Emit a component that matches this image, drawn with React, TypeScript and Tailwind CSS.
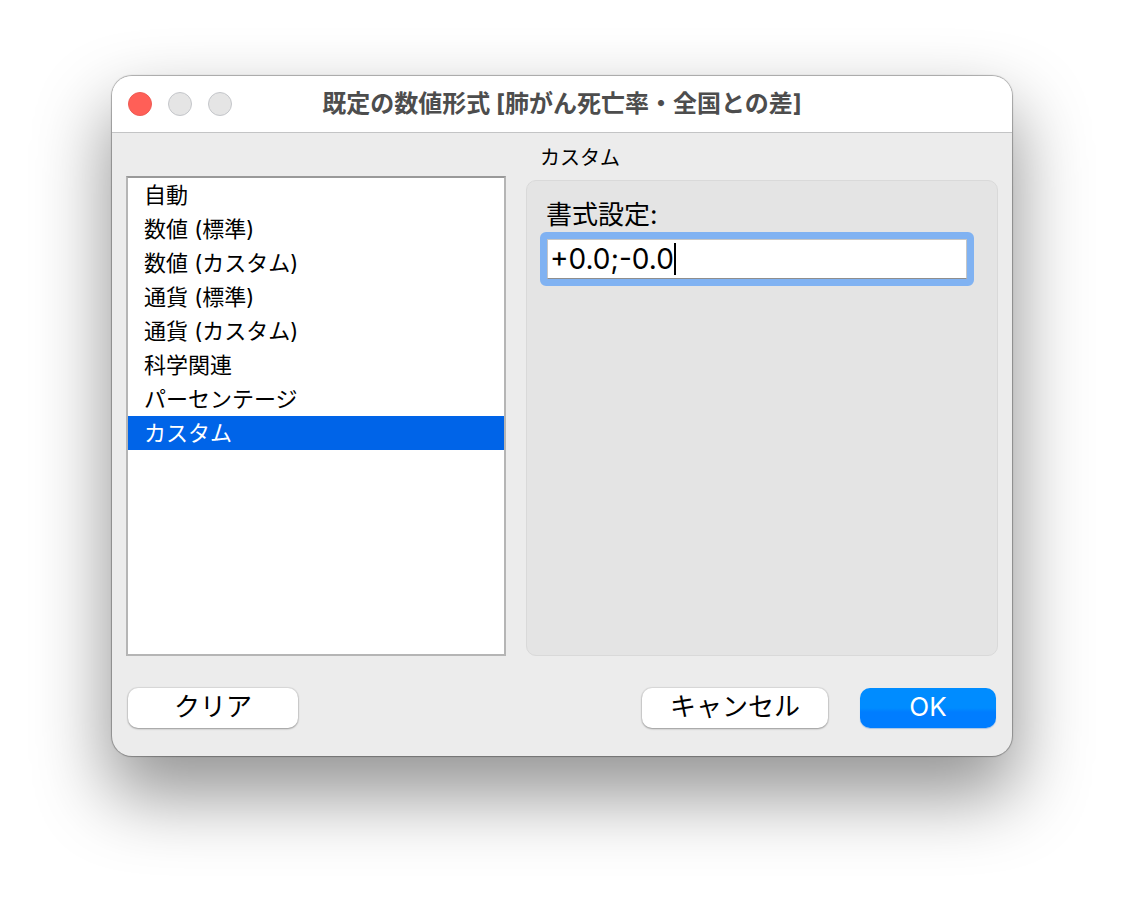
import { useState } from "react";

const FORMATS = [
  { id: "auto", label: "自動" },
  { id: "number-standard", label: "数値 (標準)" },
  { id: "number-custom", label: "数値 (カスタム)" },
  { id: "currency-standard", label: "通貨 (標準)" },
  { id: "currency-custom", label: "通貨 (カスタム)" },
  { id: "scientific", label: "科学関連" },
  { id: "percentage", label: "パーセンテージ" },
  { id: "custom", label: "カスタム" },
];

function TitleBar({ title }: { title: string }) {
  return (
    <header className="flex h-[57px] shrink-0 items-center border-b border-[#c3c4c5] bg-white px-4">
      <div className="flex flex-1 gap-4">
        <button
          type="button"
          aria-label="閉じる"
          className="size-6 rounded-full border border-[#ee5b54] bg-[#ff5f57]"
        />
        <button
          type="button"
          aria-label="しまう"
          disabled
          className="size-6 rounded-full border border-[#c4c6ca] bg-[#e5e5e5]"
        />
        <button
          type="button"
          aria-label="拡大"
          disabled
          className="size-6 rounded-full border border-[#c4c6ca] bg-[#e5e5e5]"
        />
      </div>
      <h1 className="whitespace-nowrap text-2xl font-bold text-[#4d4d4d]">{title}</h1>
      <div className="flex-1" />
    </header>
  );
}

function FormatList({
  selected,
  onSelect,
}: {
  selected: string;
  onSelect: (id: string) => void;
}) {
  return (
    <div
      role="listbox"
      aria-label="数値形式"
      className="flex flex-1 flex-col border-2 border-[#b5b5b5] border-t-[#999999] bg-white"
    >
      {FORMATS.map((format) => (
        <button
          key={format.id}
          type="button"
          role="option"
          aria-selected={format.id === selected}
          onClick={() => onSelect(format.id)}
          className={`h-[34px] px-4 text-left text-[22px] leading-8 ${
            format.id === selected ? "bg-[#0064e8] text-white" : "text-black"
          }`}
        >
          {format.label}
        </button>
      ))}
    </div>
  );
}

function PushButton({ label, className }: { label: string; className: string }) {
  return (
    <button
      type="button"
      className={`flex h-10 items-center justify-center rounded-[10px] pb-0.5 text-[26px] leading-9 ${className}`}
    >
      {label}
    </button>
  );
}

export default function App() {
  const [selected, setSelected] = useState("custom");
  const [pattern, setPattern] = useState("+0.0;-0.0");
  const current = FORMATS.find((format) => format.id === selected);

  return (
    <main className="flex min-h-screen flex-col bg-white px-28 pt-19 pb-37 font-['Inter','Noto_Sans_CJK_JP',sans-serif]">
      <div className="flex flex-1 flex-col overflow-hidden rounded-[20px] bg-[#ececec] shadow-[0_0_1px_1px_rgba(0,0,0,0.3),0_36px_72px_4px_rgba(0,0,0,0.42)]">
        <TitleBar title="既定の数値形式 [肺がん死亡率・全国との差]" />

        <div className="grid flex-1 grid-cols-[380fr_472fr] gap-5 px-3.5">
          <div className="flex flex-col pt-[43px]">
            <FormatList selected={selected} onSelect={setSelected} />
          </div>

          <section className="flex flex-col">
            <h2 className="h-[47px] px-3.5 pt-1 text-xl leading-[43px] text-black">{current?.label}</h2>
            <div className="flex-1 rounded-[10px] border border-[#d9d9d9] bg-[#e4e4e4] pt-4 pr-[23px] pl-[13px]">
              <label htmlFor="pattern" className="block px-1.5 text-[26px] leading-[35px] text-black">
                書式設定:
              </label>
              <label
                htmlFor="pattern"
                className="block rounded-md border-[7px] border-[#80b2f2] bg-white"
              >
                {/* the input grows with its value so the caret sits right after it */}
                <span className="flex h-10 items-center overflow-hidden border border-[#c6c6c6] border-b-[#8e8e8e] pl-0.5">
                  <input
                    id="pattern"
                    type="text"
                    value={pattern}
                    onChange={(e) => setPattern(e.target.value)}
                    className="[field-sizing:content] bg-transparent text-[28px] leading-9 text-black caret-transparent outline-none"
                  />
                  <span className="h-8 w-0.5 shrink-0 bg-black" aria-hidden />
                </span>
              </label>
            </div>
          </section>
        </div>

        <footer className="flex items-center px-4 pt-8 pb-7">
          <PushButton
            label="クリア"
            className="w-[170px] bg-white text-black shadow-[0_0_1px_1px_rgba(0,0,0,0.08),0_1px_2px_rgba(0,0,0,0.3)]"
          />
          <div className="ml-auto flex gap-8">
            <PushButton
              label="キャンセル"
              className="w-[186px] bg-white text-black shadow-[0_0_1px_1px_rgba(0,0,0,0.08),0_1px_2px_rgba(0,0,0,0.3)]"
            />
            <PushButton
              label="OK"
              className="w-[136px] bg-linear-to-b from-[#008cff] from-50% to-[#007dff] to-60% text-white shadow-[0_1px_1px_rgba(0,100,220,0.3)]"
            />
          </div>
        </footer>
      </div>
    </main>
  );
}
